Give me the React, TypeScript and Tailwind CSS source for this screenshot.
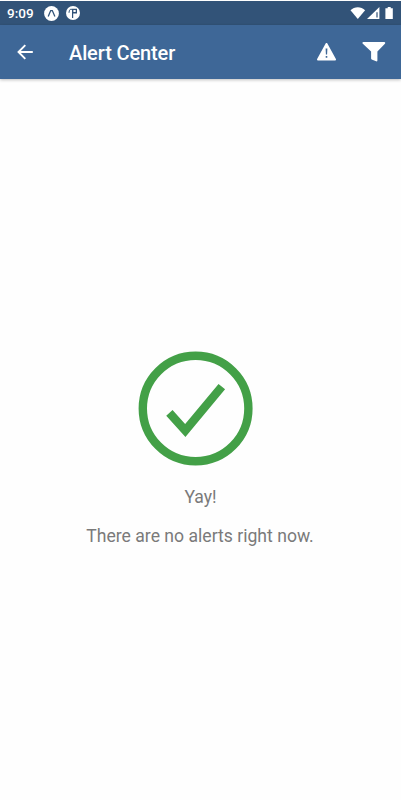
import React from "react";

function StatusBar() {
  return (
    <div className="flex h-6 items-center justify-between bg-[#325378] pl-[7px] pr-[7px] text-white">
      <div className="flex items-center">
        <span className="w-[37px] text-[13.5px] leading-6 font-medium">9:09</span>
        <svg width="15" height="15" viewBox="0 0 15 15">
          <circle cx="7.5" cy="7.5" r="7.4" fill="white" />
          <path d="M4.2 10.4 6.7 4.6h1.6L10.9 10.4" fill="none" stroke="#325378" strokeWidth="1.3" />
        </svg>
        <svg className="ml-[7px]" width="14" height="14" viewBox="0 0 14 14">
          <circle cx="7" cy="7" r="7" fill="white" />
          <path d="M6 2.8h5v4.6H7.2V12H6ZM7.4 4.1v2h2.3v-2Z" fillRule="evenodd" fill="#325378" />
          <path d="M6 3.3H4.3Q3 4.5 3 6.8" fill="none" stroke="#325378" strokeWidth="1" />
        </svg>
      </div>
      <div className="flex items-center">
        <svg width="16" height="12" viewBox="0 0 16 12" fill="white">
          <path d="M.5 3.2C4.5-.8 11.1-.8 15.1 3.2L7.8 12Z" />
        </svg>
        <svg className="ml-px" width="13" height="12" viewBox="0 0 13 12" fill="white">
          <path fillRule="evenodd" d="M12.4 0V12H0ZM10.6 5.3H9.4V10.6h1.2Z" />
        </svg>
        <svg className="ml-[5px]" width="9" height="12" viewBox="0 0 9 12" fill="white">
          <path d="M2.7 0h3v1.3h2.1V12H.4V1.3h2.3Z" />
        </svg>
      </div>
    </div>
  );
}

function Header() {
  return (
    <header className="flex h-[54px] items-center bg-[#3e6797] pl-[17px] pr-[15px] text-white shadow-[0_1px_3px_rgba(0,0,0,0.25)]">
      <svg width="16" height="16" viewBox="0 0 16 16" fill="none" stroke="white" strokeWidth="1.9">
        <path d="M15.8 8H1.6M8.3 1.1 1.5 8l6.8 6.9" />
      </svg>
      <h1 className="ml-[36px] flex-1 pt-[2px] text-[20px] leading-[26px] font-medium tracking-[-0.12px]">Alert Center</h1>
      <svg width="19" height="18" viewBox="0 0 19 18">
        <path d="M9.5 1 18 16.5H1Z" fill="white" stroke="white" strokeWidth="2" strokeLinejoin="round" />
        <path d="M8.6 5.5h1.8L10.1 11.5H8.9ZM8.7 13h1.6v1.7H8.7Z" fill="#3e6797" />
      </svg>
      <svg className="ml-[26px]" width="24" height="20" viewBox="0 0 24 20" fill="white">
        <path d="M1.4 0h20.8c1 0 1.4 1 .7 1.7L15.4 9.6v8.9c0 .8-.7 1.2-1.3.8l-4.4-1.8c-.4-.2-.6-.5-.6-.9v-7L.8 1.7C.1 1 .5 0 1.4 0Z" />
      </svg>
    </header>
  );
}

export default function App() {
  return (
    <div className="flex h-[800px] w-[401px] flex-col overflow-hidden bg-[#fefefe] pt-px font-[Roboto,sans-serif]">
      <StatusBar />
      <Header />
      <main className="flex flex-1 flex-col items-center pt-[272px] text-[#7a7a7a]">
        <svg className="mr-[9px]" width="116" height="116" viewBox="0 0 116 116" fill="none" stroke="#43a047">
          <circle cx="57.6" cy="57.5" r="52.8" strokeWidth="8.4" />
          <path d="m31.4 61.8 15.9 17.7L83.8 35.6" strokeWidth="8.5" />
        </svg>
        <p className="mt-[18px] text-[17.6px] leading-6">Yay!</p>
        <p className="mr-px mt-[15px] text-[17.6px] leading-6">There are no alerts right now.</p>
      </main>
    </div>
  );
}
